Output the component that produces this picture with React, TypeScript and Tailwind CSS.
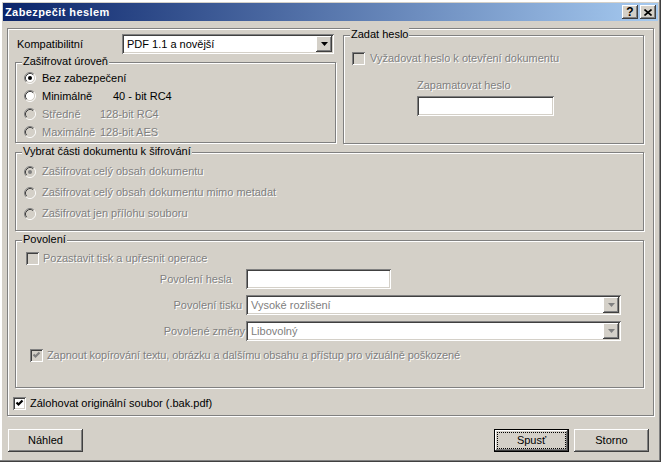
import type { ReactNode } from "react";

const raised =
  "shadow-[inset_-1px_-1px_0_#404040,inset_1px_1px_0_#fff,inset_-2px_-2px_0_#808080,inset_2px_2px_0_#d4d0c8]";
const sunken =
  "shadow-[inset_1px_1px_0_#808080,inset_-1px_-1px_0_#fff,inset_2px_2px_0_#404040,inset_-2px_-2px_0_#d4d0c8]";
const dim = "text-[#808080] [text-shadow:1px_1px_0_#fff]";

type GroupProps = { title?: string; className?: string; children?: ReactNode };

const Group = ({ title, className = "", children }: GroupProps) => (
  <div
    className={`relative shrink-0 border border-[#808080] shadow-[inset_1px_1px_0_#fff,1px_1px_0_#fff] ${className}`}
  >
    {title && (
      <span className="absolute left-[6px] top-[-8px] bg-[#d4d0c8] px-[1px] leading-[13px] whitespace-nowrap">
        {title}
      </span>
    )}
    {children}
  </div>
);

const Check = ({ checked = false, disabled = false }) => (
  <span
    className={`block h-[13px] w-[13px] shrink-0 ${disabled ? "bg-[#d4d0c8]" : "bg-white"} ${sunken}`}
  >
    {checked && (
      <svg width="13" height="13" viewBox="0 0 13 13" className="block">
        <path
          d="M3.5 5.5l2 2 4-4"
          fill="none"
          stroke={disabled ? "#808080" : "#000"}
          strokeWidth="2.2"
        />
      </svg>
    )}
  </span>
);

const Radio = ({ checked = false, disabled = false }) => (
  <svg width="12" height="12" viewBox="0 0 12 12" className="block shrink-0">
    <circle cx="6" cy="6" r="4.5" fill={disabled ? "#d4d0c8" : "#fff"} />
    <path d="M2.11 9.89A5.5 5.5 0 0 1 9.89 2.11" stroke="#808080" fill="none" />
    <path d="M9.89 2.11A5.5 5.5 0 0 1 2.11 9.89" stroke="#fff" fill="none" />
    <path d="M2.82 9.18A4.5 4.5 0 0 1 9.18 2.82" stroke="#404040" fill="none" />
    <path d="M9.18 2.82A4.5 4.5 0 0 1 2.82 9.18" stroke="#d4d0c8" fill="none" />
    {checked && <circle cx="6" cy="6" r="2" fill={disabled ? "#808080" : "#000"} />}
  </svg>
);

type SelectProps = { value: string; disabled?: boolean; className?: string };

const Select = ({ value, disabled = false, className = "" }: SelectProps) => (
  <div className={`flex h-[20px] shrink-0 items-center bg-white p-[2px] ${sunken} ${className}`}>
    <span className={`flex-1 pl-[3px] whitespace-nowrap ${disabled ? "text-[#808080]" : ""}`}>
      {value}
    </span>
    <span className={`flex h-[16px] w-[16px] items-center justify-center bg-[#d4d0c8] ${raised}`}>
      <svg width="7" height="4" viewBox="0 0 7 4" className="block">
        <path d="M0 0h7L3.5 4z" fill={disabled ? "#808080" : "#000"} />
      </svg>
    </span>
  </div>
);

const Button = ({
  label,
  primary = false,
  className = "",
}: {
  label: string;
  primary?: boolean;
  className?: string;
}) => (
  <div
    className={`flex h-[23px] w-[75px] items-center justify-center bg-[#d4d0c8] ${raised} ${
      primary ? "border border-black outline-1 outline-dotted outline-black outline-offset-[-4px]" : ""
    } ${className}`}
  >
    {label}
  </div>
);

export default function App() {
  return (
    <div className="flex h-[462px] w-[661px] flex-col bg-[#d4d0c8] p-[3px] font-['Liberation_Sans',Arial,sans-serif] text-[11px] leading-[13px] text-black shadow-[inset_-1px_-1px_0_#404040,inset_-2px_-2px_0_#808080,inset_2px_2px_0_#fff]">
      {/* title bar */}
      <div className="flex h-[18px] shrink-0 items-center bg-[linear-gradient(to_right,#0a246a,#a6caf0)] px-[2px]">
        <span className="flex-1 font-bold tracking-[0.4px] text-white">Zabezpečit heslem</span>
        <div className={`flex h-[14px] w-[16px] items-center justify-center bg-[#d4d0c8] font-bold text-[12px] ${raised}`}>
          ?
        </div>
        <div className={`ml-[2px] flex h-[14px] w-[16px] items-center justify-center bg-[#d4d0c8] ${raised}`}>
          <svg width="8" height="7" viewBox="0 0 8 7" className="block">
            <path d="M0.5 0.5l7 6M7.5 0.5l-7 6" stroke="#000" strokeWidth="1.6" />
          </svg>
        </div>
      </div>

      <div className="flex flex-1 flex-col">
        <Group className="ml-[4px] mt-[7px] h-[388px] w-[647px]">
          <div className="mt-[5px] flex items-start">
            {/* left column */}
            <div className="ml-[7px] w-[321px] shrink-0">
              <div className="flex h-[20px] items-center">
                <span className="ml-[2px] w-[105px]">Kompatibilitní</span>
                <Select value="PDF 1.1 a novější" className="w-[212px]" />
              </div>
              <Group title="Zašifrovat úroveň" className="mt-[8px] h-[81px] w-[321px] pl-[8px] pt-[6px]">
                <div className="flex h-[18px] items-center">
                  <Radio checked />
                  <span className="ml-[6px]">Bez zabezpečení</span>
                </div>
                <div className="flex h-[18px] items-center">
                  <Radio />
                  <span className="ml-[6px] w-[71px]">Minimálně</span>
                  <span>40 - bit RC4</span>
                </div>
                <div className={`flex h-[18px] items-center ${dim}`}>
                  <Radio disabled />
                  <span className="ml-[6px] w-[58px]">Středně</span>
                  <span>128-bit RC4</span>
                </div>
                <div className={`flex h-[18px] items-center ${dim}`}>
                  <Radio disabled />
                  <span className="ml-[6px] w-[58px]">Maximálně</span>
                  <span>128-bit AES</span>
                </div>
              </Group>
            </div>

            {/* right column */}
            <Group title="Zadat heslo" className="ml-[7px] mt-[1px] h-[109px] w-[301px]">
              <div className="flex items-center pl-[8px] pt-[16px]">
                <Check disabled />
                <span className={`ml-[5px] ${dim}`}>Vyžadovat heslo k otevření dokumentu</span>
              </div>
              <div className={`ml-[73px] mt-[14px] ${dim}`}>Zapamatovat heslo</div>
              <div className={`ml-[73px] mt-[4px] h-[20px] w-[137px] bg-white ${sunken}`} />
            </Group>
          </div>

          <Group
            title="Vybrat části dokumentu k šifrování"
            className="ml-[7px] mt-[8px] h-[79px] w-[629px] pl-[8px] pt-[8px]"
          >
            <div className="flex h-[21px] items-center">
              <Radio checked disabled />
              <span className={`ml-[6px] ${dim}`}>Zašifrovat celý obsah dokumentu</span>
            </div>
            <div className="flex h-[21px] items-center">
              <Radio disabled />
              <span className={`ml-[6px] ${dim}`}>Zašifrovat celý obsah dokumentu mimo metadat</span>
            </div>
            <div className="flex h-[21px] items-center">
              <Radio disabled />
              <span className={`ml-[6px] ${dim}`}>Zašifrovat jen přílohu souboru</span>
            </div>
          </Group>

          <Group title="Povolení" className="ml-[7px] mt-[9px] h-[148px] w-[629px]">
            <div className="flex items-center pl-[10px] pt-[11px]">
              <Check disabled />
              <span className={`ml-[4px] ${dim}`}>Pozastavit tisk a upřesnit operace</span>
            </div>
            <div className="mt-[4px] flex h-[20px] items-center">
              <span className={`w-[230px] pr-[14px] text-right ${dim}`}>Povolení hesla</span>
              <div className={`h-[20px] w-[145px] bg-white ${sunken}`} />
            </div>
            <div className="mt-[6px] flex h-[20px] items-center">
              <span className={`w-[230px] pr-[4px] text-right ${dim}`}>Povolení tisku</span>
              <Select value="Vysoké rozlišení" disabled className="w-[375px]" />
            </div>
            <div className="mt-[6px] flex h-[20px] items-center">
              <span className={`w-[230px] pr-[1px] text-right ${dim}`}>Povolené změny</span>
              <Select value="Libovolný" disabled className="w-[375px]" />
            </div>
            <div className="mt-[8px] flex items-center pl-[14px]">
              <Check checked disabled />
              <span className={`ml-[4px] tracking-[-0.1px] ${dim}`}>
                Zapnout kopírování textu, obrázku a dalšímu obsahu a přístup pro vizuálně poškozené
              </span>
            </div>
          </Group>

          <div className="ml-[5px] mt-[9px] flex items-center">
            <Check checked />
            <span className="ml-[4px]">Zálohovat originální soubor (.bak.pdf)</span>
          </div>
        </Group>

        <div className="mt-[13px] flex pl-[5px] pr-[9px]">
          <Button label="Náhled" />
          <div className="flex-1" />
          <Button label="Spusť" primary />
          <Button label="Storno" className="ml-[5px]" />
        </div>
      </div>
    </div>
  );
}
